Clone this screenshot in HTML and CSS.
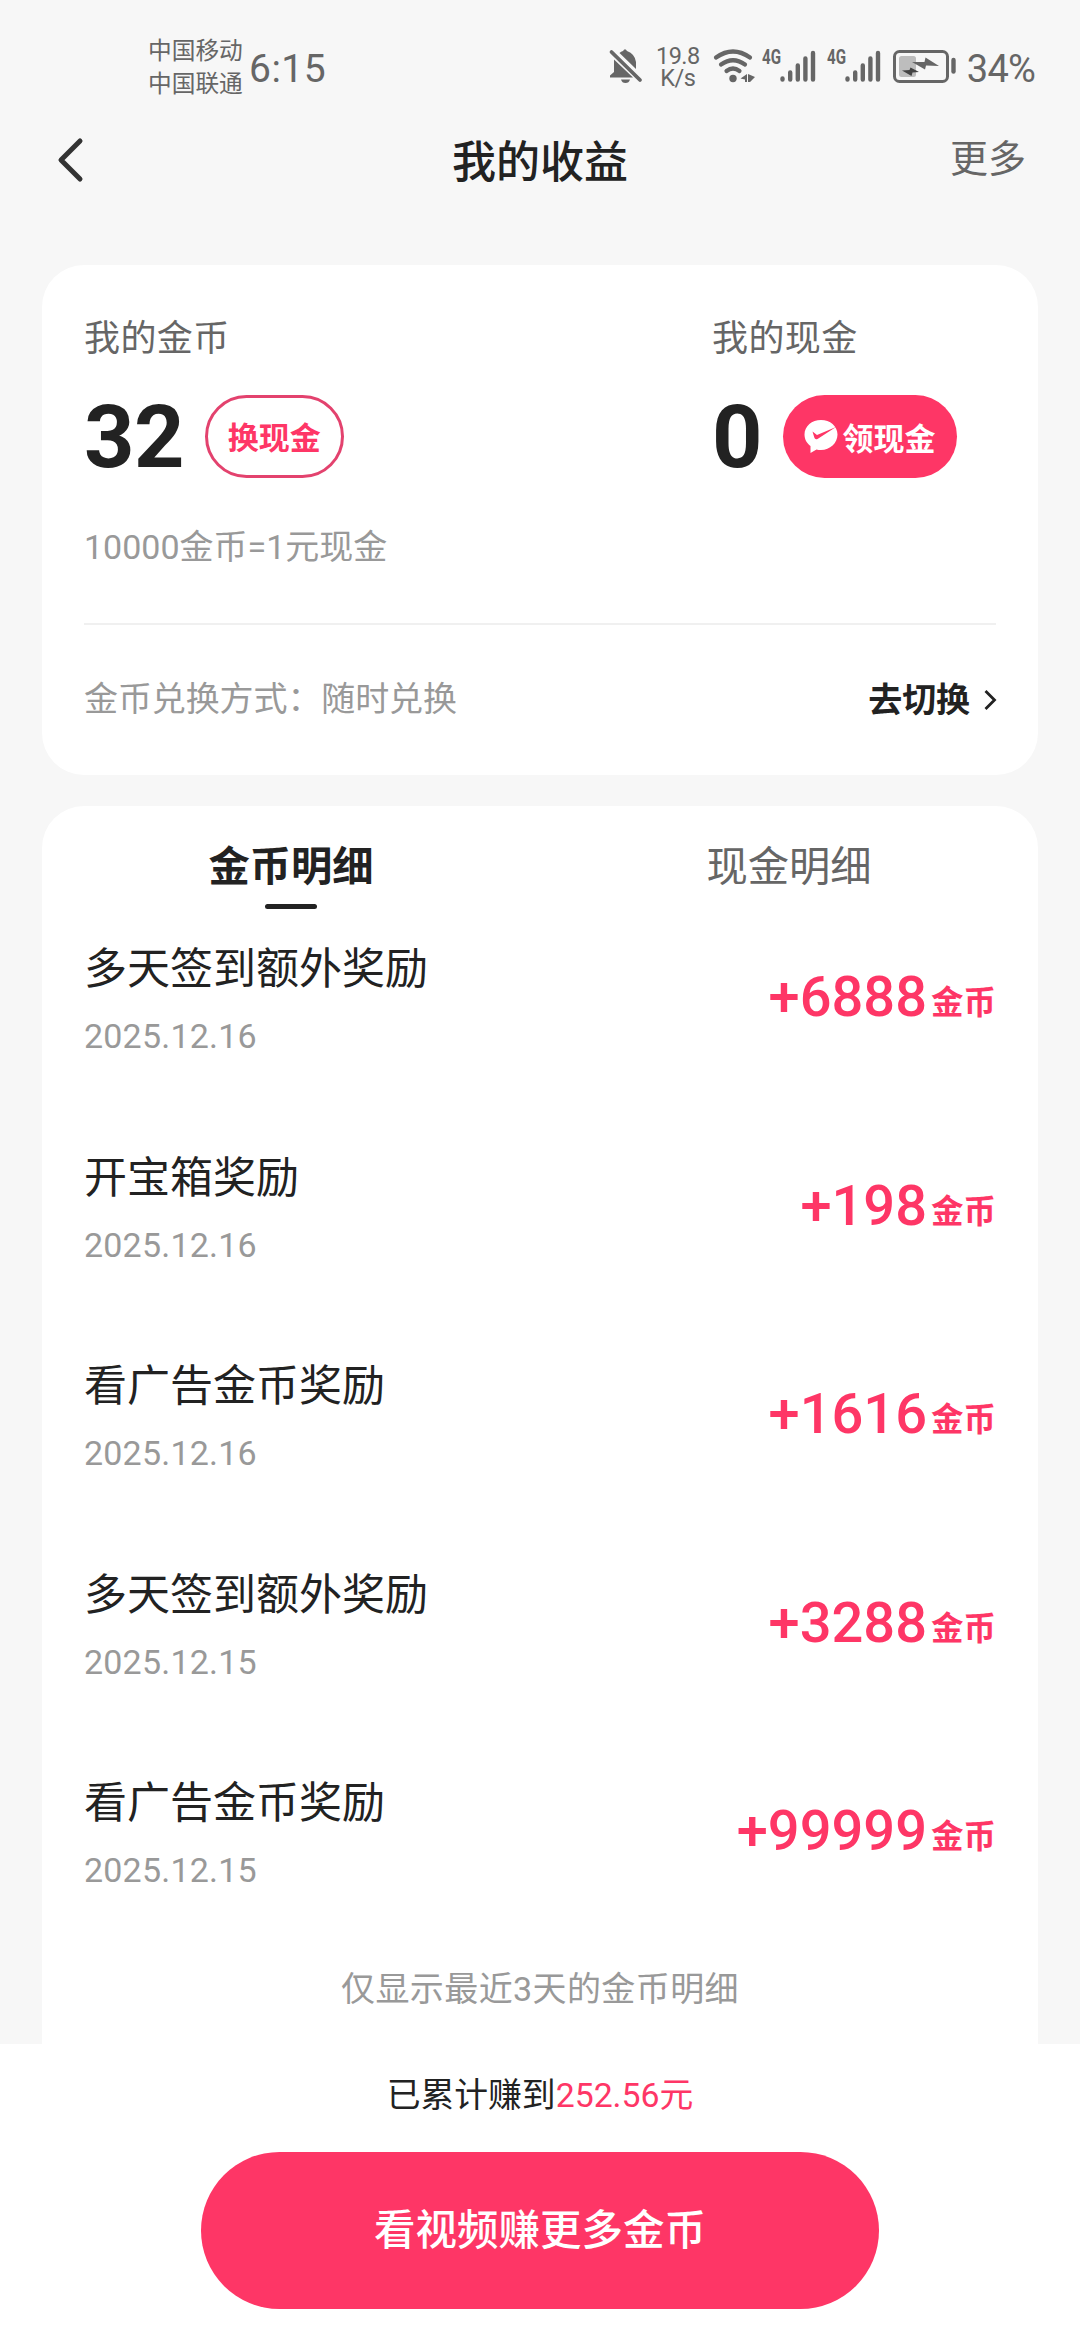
FILE: index.html
```html
<!DOCTYPE html>
<html lang="zh-CN">
<head>
<meta charset="utf-8">
<title>我的收益</title>
<link rel="stylesheet" href="styles.css">
</head>
<body>
<div class="screen">
  <header class="status">
    <div class="carriers"><span>中国移动</span><span>中国联通</span></div>
    <div class="clock">6:15</div>
    <div class="status-right">
      <svg class="bell" width="34" height="36" viewBox="0 0 34 36">
        <path d="M10.500 5 Q12 3.500 14 3 Q16 -.5 18 3 Q26 6 27 14 V21 Z M5 11.500 L24 29.500 H1 V27.500 L5 24 Z M12 31.500 H21 Q20 35 16.500 35 Q13 35 12 31.500 Z" fill="#666"/>
        <path d="M2.500 4 L31 32" stroke="#666" stroke-width="3.800" stroke-linecap="round"/>
      </svg>
      <div class="speed"><span>19.8</span><span>K/s</span></div>
      <svg class="wifi" width="44" height="36" viewBox="0 0 44 36">
        <g fill="none" stroke="#666" stroke-width="4.200" stroke-linecap="round">
          <path d="M3 9.500 Q20 -2.500 37 9.500"/><path d="M8 16.500 Q20 8 32 16.500"/><path d="M13.500 23 Q20 18 26.500 23"/>
        </g>
        <circle cx="20" cy="30.500" r="3.700" fill="#666"/>
        <path d="M27.500 30.500 L34 26 V34 H32 V31.500 Z M35 26 L42 29 L37 34 H35 Z" fill="#666"/>
      </svg>
      <svg class="signal" width="56" height="36" viewBox="0 0 56 36">
        <text x="0" y="16" class="net" textLength="19" lengthAdjust="spacingAndGlyphs">4G</text>
        <g stroke="#666" stroke-width="4.400" stroke-linecap="round"><path d="M20.500 30.500V31.500M28.200 24.500V31.500M35.800 17.500V31.500M43.400 10.500V31.500M51 5V31.500"/></g>
      </svg>
      <svg class="signal second" width="56" height="36" viewBox="0 0 56 36">
        <text x="0" y="16" class="net" textLength="19" lengthAdjust="spacingAndGlyphs">4G</text>
        <g stroke="#666" stroke-width="4.400" stroke-linecap="round"><path d="M20.500 30.500V31.500M28.200 24.500V31.500M35.800 17.500V31.500M43.400 10.500V31.500M51 5V31.500"/></g>
      </svg>
      <svg class="battery" width="64" height="36" viewBox="0 0 64 36">
        <rect x="1.500" y="3.500" width="53" height="30" rx="5" fill="none" stroke="#666" stroke-width="3"/>
        <rect x="6" y="8" width="17" height="21" rx="2.500" fill="#bdbdbd"/>
        <path d="M19 14 L31.500 14 L32.500 9.500 L46 18 L33 17.500 L32 21.500 Z" fill="#666"/>
        <path d="M9 22.500 L16.500 22 L17.500 19.500 L26 24 L19.500 24.500 L18.500 28 Z" fill="#444"/>
        <path d="M60.500 12V23.500" stroke="#666" stroke-width="4.400" stroke-linecap="round"/>
      </svg>
      <div class="percent">34%</div>
    </div>
  </header>

  <nav class="topbar">
    <svg class="back" width="30" height="48" viewBox="0 0 30 48"><path d="M24 5 L5 24 L24 43" fill="none" stroke="#333" stroke-width="5" stroke-linecap="round" stroke-linejoin="round"/></svg>
    <h1>我的收益</h1>
    <a class="more">更多</a>
  </nav>

  <section class="card balance">
    <div class="wallets">
      <div class="wallet">
        <p class="label">我的金币</p>
        <div class="sum"><strong>32</strong><a class="pill outline">换现金</a></div>
        <p class="rate">10000金币=1元现金</p>
      </div>
      <div class="wallet cash">
        <p class="label">我的现金</p>
        <div class="sum"><strong>0</strong><a class="pill solid"><svg width="34" height="34" viewBox="0 0 34 34"><path d="M17 1 C26 1 33.500 7 33.500 15.500 C33.500 24 26 31 17 31 Q14.500 31 12.500 30.500 L6.500 34 V27 C3 24.500 .5 20.500 .5 15.500 C.5 7 8 1 17 1 Z" fill="#fff"/><path d="M8.500 12.500 L13 16 L32 8 L13.500 20 Q11 21 10.300 18.500 Z" fill="#fe3666"/></svg>领现金</a></div>
      </div>
    </div>
    <div class="exchange">
      <span>金币兑换方式：随时兑换</span>
      <a class="switch">去切换<svg width="14" height="24" viewBox="0 0 14 24"><path d="M2.500 3 L11.500 12 L2.500 21" fill="none" stroke="#222" stroke-width="2.800"/></svg></a>
    </div>
  </section>

  <section class="card details">
    <div class="tabs"><a class="tab active">金币明细</a><a class="tab">现金明细</a></div>
    <ul class="records">
      <li><div><h2>多天签到额外奖励</h2><time>2025.12.16</time></div><div class="amount"><b>+6888</b><small>金币</small></div></li>
      <li><div><h2>开宝箱奖励</h2><time>2025.12.16</time></div><div class="amount"><b>+198</b><small>金币</small></div></li>
      <li><div><h2>看广告金币奖励</h2><time>2025.12.16</time></div><div class="amount"><b>+1616</b><small>金币</small></div></li>
      <li><div><h2>多天签到额外奖励</h2><time>2025.12.15</time></div><div class="amount"><b>+3288</b><small>金币</small></div></li>
      <li><div><h2>看广告金币奖励</h2><time>2025.12.15</time></div><div class="amount"><b>+99999</b><small>金币</small></div></li>
    </ul>
    <p class="note">仅显示最近3天的金币明细</p>
  </section>

  <footer class="bottom">
    <p>已累计赚到<em>252.56元</em></p>
    <a class="cta">看视频赚更多金币</a>
  </footer>
</div>
</body>
</html>
```
FILE: styles.css
```css
* { box-sizing: border-box; margin: 0; padding: 0; }
body { background: #f7f7f7; color: #222; font-family: Roboto, "Noto Sans CJK SC", sans-serif; }
.screen { width: 1080px; height: 2340px; display: flex; flex-direction: column; overflow: hidden; }
svg { display: block; flex: none; overflow: visible; }

.status { height: 108px; padding: 33px 45px 0 148px; display: flex; align-items: flex-start; color: #666; }
.carriers { display: flex; flex-direction: column; width: 101px; font-size: 23.7px; line-height: 33px; padding-top: 2px; white-space: nowrap; }
.clock { font-size: 39px; line-height: 72px; letter-spacing: .5px; }
.status-right { margin-left: auto; display: flex; align-items: flex-start; padding-top: 15px; }
.bell { margin-right: 13px; }
.speed { display: flex; flex-direction: column; align-items: center; width: 44px; font-size: 23.500px; line-height: 22px; margin: -3px 13px 0 0; letter-spacing: -.5px; }
.wifi { margin-right: 5px; }
.signal.second { margin: 0 10px 0 9px; }
.net { font: 700 20px Roboto, sans-serif; fill: #666; }
.percent { font-size: 38px; line-height: 42px; letter-spacing: -.8px; margin-left: 10px; }

.topbar { height: 157px; padding: 0 54px 0 56px; display: grid; grid-template-columns: 1fr auto 1fr; align-items: start; }
.back { margin-top: 28px; }
.topbar h1 { font-size: 44px; line-height: 60px; font-weight: 500; margin: 25px 2px 0 0; }
.more { justify-self: end; font-size: 38px; line-height: 50px; margin-top: 26px; color: #666; }

.card { width: 996px; margin: 0 auto; background: #fff; border-radius: 42px; }
.balance { height: 510px; flex: none; padding: 0 42px; }
.wallets { height: 360px; padding-top: 49px; display: grid; grid-template-columns: 628px 1fr; border-bottom: 2px solid #f0f0f0; }
.label { font-size: 36px; line-height: 50px; color: #666; letter-spacing: .4px; }
.sum { display: flex; align-items: center; height: 83px; margin-top: 31px; }
.sum strong { font-size: 88px; line-height: 83px; font-weight: 700; letter-spacing: -.6px; margin-right: 21px; }
.pill { height: 83px; border-radius: 42px; display: flex; align-items: center; justify-content: center; font-size: 31px; font-weight: 700; color: #fe3666; padding-bottom: 2px; }
.outline { width: 139px; border: 3px solid #e3426e; }
.solid { width: 174px; background: #fe3666; color: #fff; gap: 4px; padding-bottom: 1px; }
.rate { font-size: 34px; line-height: 50px; color: #999; margin-top: 44px; }
.exchange { height: 150px; display: flex; justify-content: space-between; font-size: 34px; line-height: 149px; color: #999; letter-spacing: -.1px; }
.switch { display: flex; align-items: center; gap: 13px; margin-right: -1px; color: #222; font-weight: 700; }

.details { margin-top: 31px; flex: 1; border-radius: 42px 42px 0 0; padding: 0 42px; }
.tabs { display: grid; grid-template-columns: 1fr 1fr; margin: 0 -42px; height: 129px; }
.tab { display: flex; flex-direction: column; align-items: center; font-size: 41.300px; line-height: 60px; color: #666; padding-top: 31px; }
.active { color: #222; font-weight: 700; }
.active::after { content: ""; width: 52px; height: 5px; border-radius: 3px; background: #222; margin-top: 7px; }
.records { list-style: none; }
.records li { height: 208.500px; display: flex; justify-content: space-between; }
.records h2 { font-size: 43px; line-height: 66px; font-weight: 400; margin-top: 1px; }
.records time { display: block; font-size: 34px; line-height: 50px; color: #999; margin-top: 9px; letter-spacing: .2px; }
.amount { color: #fe3666; display: flex; align-items: baseline; height: 70px; line-height: 70px; margin-top: 27px; }
.amount b { font-size: 56px; font-weight: 500; }
.amount small { font-size: 32.500px; font-weight: 700; margin-left: 4px; position: relative; top: -2px; }
.note { font-size: 34px; line-height: 50px; text-align: center; color: #999; margin-top: -14px; letter-spacing: .4px; }

.bottom { flex: none; height: 296px; background: #fff; display: flex; flex-direction: column; align-items: center; }
.bottom p { font-size: 33.800px; line-height: 50px; margin-top: 27px; }
.bottom em { font-style: normal; color: #fe3666; }
.cta { width: 678px; height: 157px; margin-top: 31px; border-radius: 79px; background: #fe3666; color: #fff; font-size: 41.500px; font-weight: 500; line-height: 157px; text-align: center; }
```
